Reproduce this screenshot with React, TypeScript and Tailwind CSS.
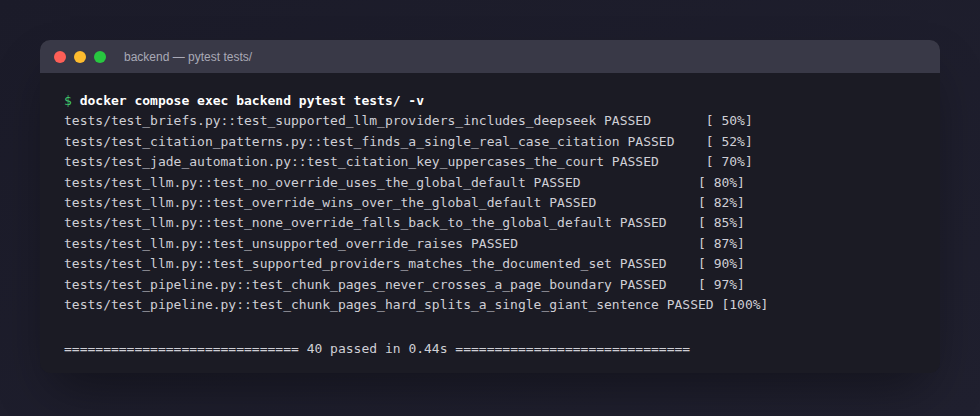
import React from 'react';

type Row = { name: string; pad: number; pct: string };

const ROWS: Row[] = [
  { name: 'tests/test_briefs.py::test_supported_llm_providers_includes_deepseek', pad: 7, pct: '[ 50%]' },
  { name: 'tests/test_citation_patterns.py::test_finds_a_single_real_case_citation', pad: 4, pct: '[ 52%]' },
  { name: 'tests/test_jade_automation.py::test_citation_key_uppercases_the_court', pad: 6, pct: '[ 70%]' },
  { name: 'tests/test_llm.py::test_no_override_uses_the_global_default', pad: 15, pct: '[ 80%]' },
  { name: 'tests/test_llm.py::test_override_wins_over_the_global_default', pad: 13, pct: '[ 82%]' },
  { name: 'tests/test_llm.py::test_none_override_falls_back_to_the_global_default', pad: 4, pct: '[ 85%]' },
  { name: 'tests/test_llm.py::test_unsupported_override_raises', pad: 23, pct: '[ 87%]' },
  { name: 'tests/test_llm.py::test_supported_providers_matches_the_documented_set', pad: 4, pct: '[ 90%]' },
  { name: 'tests/test_pipeline.py::test_chunk_pages_never_crosses_a_page_boundary', pad: 4, pct: '[ 97%]' },
  { name: 'tests/test_pipeline.py::test_chunk_pages_hard_splits_a_single_giant_sentence', pad: 1, pct: '[100%]' },
];

const MONO = "font-['DejaVu_Sans_Mono',monospace]";

export default function App() {
  return (
    <div className="w-[980px] h-[416px] bg-gradient-to-br from-[#1b1b29] to-[#20202f] p-10">
      {/* Terminal window */}
      <div className="w-[900px] rounded-[10px] overflow-hidden bg-[#1b1b24] shadow-2xl shadow-black/40">
        {/* Title bar */}
        <div className="h-[33px] bg-[#393947] flex items-center px-[14px]">
          <div className="flex gap-2">
            <span className="h-3 w-3 rounded-full bg-[#fe5f57]" />
            <span className="h-3 w-3 rounded-full bg-[#febc2e]" />
            <span className="h-3 w-3 rounded-full bg-[#28c840]" />
          </div>
          <span className="ml-[18px] text-[12px] text-[#a9a9b6] font-['Liberation_Sans',Arial,sans-serif]">
            backend — pytest tests/
          </span>
        </div>

        {/* Output */}
        <div className={`${MONO} text-[13px] leading-[20.4px] text-[#cfcfd6] px-6 pt-[18px] pb-[14px] whitespace-pre`}>
          <div>
            <span className="text-[#3fc56b]">$</span>
            <span className="text-white font-bold"> docker compose exec backend pytest tests/ -v</span>
          </div>
          {ROWS.map((r) => (
            <div key={r.name}>
              {r.name} PASSED{' '.repeat(r.pad)}{r.pct}
            </div>
          ))}
          <div className="mt-[23.6px]">
            {'='.repeat(30)} 40 passed in 0.44s {'='.repeat(30)}
          </div>
        </div>
      </div>
    </div>
  );
}
